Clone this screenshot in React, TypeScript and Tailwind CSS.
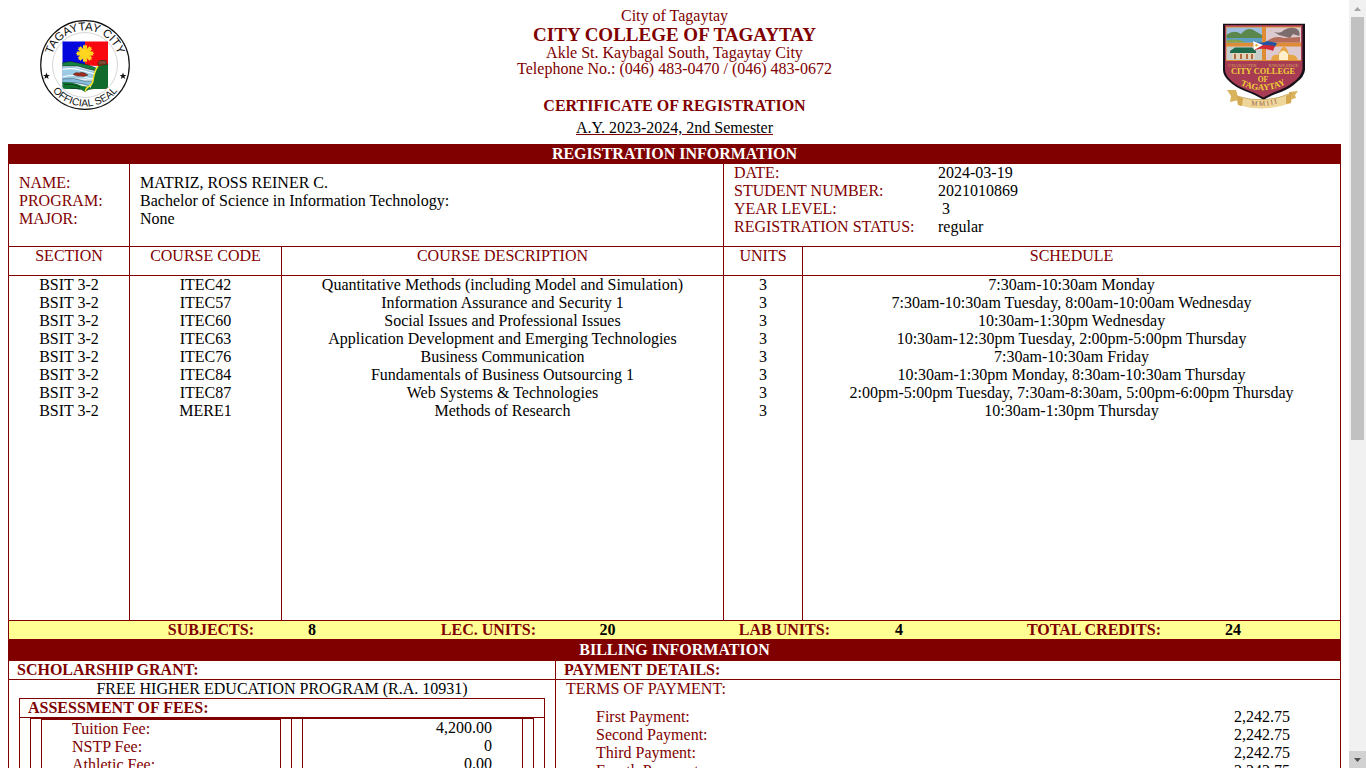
import React from "react";

const courses = [
  ["BSIT 3-2", "ITEC42", "Quantitative Methods (including Model and Simulation)", "3", "7:30am-10:30am Monday"],
  ["BSIT 3-2", "ITEC57", "Information Assurance and Security 1", "3", "7:30am-10:30am Tuesday, 8:00am-10:00am Wednesday"],
  ["BSIT 3-2", "ITEC60", "Social Issues and Professional Issues", "3", "10:30am-1:30pm Wednesday"],
  ["BSIT 3-2", "ITEC63", "Application Development and Emerging Technologies", "3", "10:30am-12:30pm Tuesday, 2:00pm-5:00pm Thursday"],
  ["BSIT 3-2", "ITEC76", "Business Communication", "3", "7:30am-10:30am Friday"],
  ["BSIT 3-2", "ITEC84", "Fundamentals of Business Outsourcing 1", "3", "10:30am-1:30pm Monday, 8:30am-10:30am Thursday"],
  ["BSIT 3-2", "ITEC87", "Web Systems & Technologies", "3", "2:00pm-5:00pm Tuesday, 7:30am-8:30am, 5:00pm-6:00pm Thursday"],
  ["BSIT 3-2", "MERE1", "Methods of Research", "3", "10:30am-1:30pm Thursday"],
];

const columns = ["SECTION", "COURSE CODE", "COURSE DESCRIPTION", "UNITS", "SCHEDULE"];

const totals = [
  ["SUBJECTS:", "8"],
  ["LEC. UNITS:", "20"],
  ["LAB UNITS:", "4"],
  ["TOTAL CREDITS:", "24"],
];

const fees = [
  ["Tuition Fee:", "4,200.00"],
  ["NSTP Fee:", "0"],
  ["Athletic Fee:", "0.00"],
];

const payments = [
  ["First Payment:", "2,242.75"],
  ["Second Payment:", "2,242.75"],
  ["Third Payment:", "2,242.75"],
  ["Fourth Payment:", "2,242.75"],
];

function CitySeal() {
  const rays = [0, 45, 90, 135, 180, 225, 270, 315];
  return (
    <svg viewBox="0 0 90 90" className="h-[90px] w-[90px]" role="img" aria-label="Tagaytay City official seal">
      <defs>
        <path id="seal-top" d="M12 55 A34.5 34.5 0 1 1 78 55" />
        <path id="seal-bottom" d="M3.500 45 A41.500 41.500 0 0 0 86.500 45" />
        <clipPath id="seal-shield">
          <path d="M22.500 21.500 H68 V66 Q68 69 64 69 H54 Q48 69 45 72 Q42 69 36 69 H26 Q22.500 69 22.500 66 Z" />
        </clipPath>
      </defs>
      <circle cx="45" cy="45" r="44.300" fill="#fff" stroke="#111" strokeWidth="1.200" />
      <circle cx="45" cy="45" r="32.500" fill="none" stroke="#bbb" strokeWidth="0.600" />
      <g clipPath="url(#seal-shield)">
        <path d="M22 21 H45 V73 H22 Z" fill="#0508dc" />
        <path d="M45 21 H69 V73 H45 Z" fill="#f8080f" />
        <path d="M22 44 L58 46 V73 H22 Z" fill="#e4f0f6" />
        <path d="M22 43 Q30 40 38 43 Q48 44 58 49 L57 51 Q47 49 38 46 L22 46 Z" fill="#14853e" stroke="#123" strokeWidth="0.600" />
        <path d="M22 47 Q36 46 47 50 L58 52 L54 60 Q38 57 22 59 Z" fill="#9ccbe6" />
        <path d="M22 49.500 Q32 47.500 40 50 T56 54 M22 57 Q34 54 44 57 T54 58" fill="none" stroke="#fff" strokeWidth="1.200" />
        <path d="M33 54.500 Q36 51.500 39 53 Q43 51 48 55 L44 56.500 L37 56 Z" fill="#a02a22" stroke="#432" strokeWidth="0.500" />
        <path d="M22 59 Q34 57 44 61 L53 61 L50 66 Q36 61 22 63 Z" fill="#86bddc" stroke="#345" strokeWidth="0.500" />
        <path d="M22 62 Q34 62 42 66 L50 67 V73 H22 Z" fill="#10752f" />
        <path d="M24 64.500 Q33 63 40 67 M30 68 L40 69" fill="none" stroke="#111" strokeWidth="0.500" />
        <path d="M69 44 L58 46 Q53 53 53 62 L48 73 H69 Z" fill="#126b2d" />
        <path d="M58 46 Q54 52 53 61 Q52 65 48 67 Q46 68 45 72" fill="none" stroke="#f3e324" strokeWidth="1.400" />
        <path d="M58 42 L60 40.500 H66 L67 44.500 L58 45 Z" fill="#7e4931" stroke="#321" strokeWidth="0.600" />
        <g fill="#ffd51f">
          {rays.map((a) => (
            <path key={a} d="M43 28.500 L43 25 L44.300 25.700 L45 24 L45.700 25.700 L47 25 L47 28.500 Z" transform={`rotate(${a} 45 33.500)`} />
          ))}
          <circle cx="45" cy="33.500" r="5.500" />
        </g>
      </g>
      <g fill="#111">
        <path d="M0 -3.400 L0.900 -1 L3.400 -1 L1.400 0.600 L2.100 3 L0 1.600 L-2.100 3 L-1.400 0.600 L-3.400 -1 L-0.900 -1 Z" transform="translate(6.500 56)" />
        <path d="M0 -3.400 L0.900 -1 L3.400 -1 L1.400 0.600 L2.100 3 L0 1.600 L-2.100 3 L-1.400 0.600 L-3.400 -1 L-0.900 -1 Z" transform="translate(83 56)" />
      </g>
      <text fontFamily="Liberation Sans, sans-serif" fontSize="11.500" fill="#111" textAnchor="middle">
        <textPath href="#seal-top" startOffset="50%">TAGAYTAY CITY</textPath>
      </text>
      <text fontFamily="Liberation Sans, sans-serif" fontSize="10.200" fill="#111" textAnchor="middle">
        <textPath href="#seal-bottom" startOffset="50%">OFFICIAL SEAL</textPath>
      </text>
    </svg>
  );
}

function CollegeCrest() {
  return (
    <svg viewBox="0 0 90 90" className="h-[90px] w-[90px]" role="img" aria-label="City College of Tagaytay crest">
      <defs>
        <path id="crest-arc" d="M14 62 Q42 79 70 61" />
        <path id="ribbon-arc" d="M24 84 Q43 89 62 81" />
      </defs>
      <path d="M2 3.700 H84 V50 Q83 57 76 62 Q70 68 60 72 Q48 76 42.500 80 Q35 75 24 71 Q14 67 9 62 Q2 56 2 50 Z" fill="#17101a" />
      <path d="M4 5 H81.500 V49.500 Q80 56 74 61 Q68 66 59 70 Q48 74 42.500 77.500 Q35 73 25 69.500 Q15 65.500 10.500 61 Q4 55 4 49.500 Z" fill="#a63b53" />
      <path d="M5 6.500 H80 V41 H5 Z" fill="#e08b35" />
      <path d="M5.500 7.500 H41 V22.500 H5.500 Z" fill="#9dbdde" />
      <path d="M5.500 15 Q13 9 20 14 Q27 6 34 11 L41 15 V19 H5.500 Z" fill="#5c874c" />
      <path d="M5.500 18 H41 V22.500 H5.500 Z" fill="#5c9fc3" />
      <path d="M5.500 20.500 Q16 17.500 25 22.500 H5.500 Z" fill="#8aa24a" />
      <path d="M45 7.500 H80 V22.500 H45 Z" fill="#dccace" />
      <path d="M48 9 Q58 16 63 10 Q70 6 76 9 Q80 12 78 16 L72 14 L69 18 L58 15 Z" fill="#7d6c6c" />
      <path d="M46 21 Q54 15 63 18 L79 17 V22.500 H46 Z" fill="#b56c58" />
      <path d="M5.500 26.500 H41 V40 H5.500 Z" fill="#c5ceca" />
      <path d="M9 31 L14 27.500 H31 L35 31 V33 H9 Z" fill="#1f6a4c" />
      <path d="M11 33 H34 V39 H11 Z" fill="#e1d4b8" />
      <path d="M14 34 V39 M20 34 V39 M26 34 V39 M31 34 V39" stroke="#b06a42" strokeWidth="2" />
      <path d="M45 26.500 H80 V40 H45 Z" fill="#dccad0" />
      <path d="M50 40 Q51 34 57 35 L60 29 L63 26 L66 29 L68 35 Q75 34 77 40 Z" fill="#e7a444" />
      <path d="M58 40 V34 Q62 27 67 34 V40 Z" fill="#fff0c9" />
      <path d="M32 21 Q42 24 46 21 L56 23 L54 27 Q44 25 33 26 Z" fill="#2354a3" />
      <path d="M33 26 Q44 24 54 26 L52 31 Q43 27 34 30 Z" fill="#d22a35" />
      <path d="M32 21 L42 25 L33 30 Z" fill="#fff" />
      <circle cx="35.500" cy="25.300" r="1.200" fill="#e3aa25" />
      <g fontFamily="Liberation Serif, serif" textAnchor="middle" fill="#efcf38">
        <text x="21.500" y="46.500" fontSize="4.700" fill="#d9a65d">CHARACTER</text>
        <text x="62.500" y="46.500" fontSize="4.700" fill="#d9a65d">KNOWLEDGE</text>
        <text x="42" y="54" fontSize="8.400" fontWeight="bold">CITY COLLEGE</text>
        <text x="42" y="61.500" fontSize="7.500" fontWeight="bold">OF</text>
        <text fontSize="8.800" fontWeight="bold"><textPath href="#crest-arc" startOffset="50%">TAGAYTAY</textPath></text>
      </g>
      <path d="M6 70 L15 70 L18 80 L9 82 L10 76 Z M77 71 L68 72 L68 80 L75 78 L74 75 Z" fill="#d9b35d" />
      <path d="M15.500 76 Q43 85 71 73 L70 83 Q43 93 17 85 Z" fill="#efd69a" />
      <path d="M15.500 76 Q43 85 71 73" fill="none" stroke="#c39a49" strokeWidth="0.800" />
      <path d="M15.500 76 L22 78 L21 86 L17 85 Z M71 73 L65 76 L65 84 L70 83 Z" fill="#d4a850" />
      <text fontFamily="Liberation Serif, serif" fontSize="7" fill="#946048" textAnchor="middle">
        <textPath href="#ribbon-arc" startOffset="50%">M M I I I</textPath>
      </text>
    </svg>
  );
}

function InfoRow({ label, value }: { label: string; value: string }) {
  return (
    <div className="grid grid-cols-[204px_1fr]">
      <dt className="text-[#800000]">{label}</dt>
      <dd>{value}</dd>
    </div>
  );
}

function Scrollbar() {
  return (
    <div aria-hidden="true" className="flex w-[17px] shrink-0 flex-col bg-[#f1f1f1]">
      <div className="flex h-[17px] items-center justify-center">
        <svg viewBox="0 0 7 4" className="h-1 w-[7px]"><path d="M0 4 L3.500 0 L7 4 Z" fill="#a3a3a3" /></svg>
      </div>
      <div className="flex-1 px-0.5">
        <div className="h-[57.6%] w-[13px] bg-[#c1c1c1]" />
      </div>
      <div className="flex h-[17px] items-center justify-center bg-[#d2d2d2]">
        <svg viewBox="0 0 7 4" className="h-1 w-[7px]"><path d="M0 0 L3.500 4 L7 0 Z" fill="#505050" /></svg>
      </div>
    </div>
  );
}

export default function App() {
  return (
    <div className="flex h-screen overflow-hidden bg-white font-['Liberation_Serif',serif] text-[16px] leading-[18px] text-black">
      <main className="min-w-0 flex-1 overflow-hidden px-2">
        <header className="flex items-start justify-between pt-2">
          <div className="w-[152px] pt-3 pl-8"><CitySeal /></div>
          <div className="text-center text-[#800000]">
            <p className="leading-4">City of Tagaytay</p>
            <h1 className="text-[19px] leading-[21px] font-bold">CITY COLLEGE OF TAGAYTAY</h1>
            <p className="leading-4">Akle St. Kaybagal South, Tagaytay City</p>
            <p className="leading-4">Telephone No.: (046) 483-0470 / (046) 483-0672</p>
            <h2 className="pt-5 font-bold">CERTIFICATE OF REGISTRATION</h2>
            <p className="pt-1 pb-[7px] text-black underline decoration-[#800000]">A.Y. 2023-2024, 2nd Semester</p>
          </div>
          <div className="w-[152px] pt-3 pl-8"><CollegeCrest /></div>
        </header>

        <section className="border-x border-[#800000]">
          <h2 className="bg-[#800000] pb-px text-center leading-[19px] font-bold text-white">REGISTRATION INFORMATION</h2>
          <div className="grid grid-cols-[121fr_594fr_616fr] border-b border-[#800000]">
            <div className="border-r border-[#800000] pt-2.5 pl-2.5 text-[#800000]">
              <p>NAME:</p>
              <p>PROGRAM:</p>
              <p>MAJOR:</p>
            </div>
            <div className="border-r border-[#800000] pt-2.5 pl-2.5">
              <p>MATRIZ, ROSS REINER C.</p>
              <p>Bachelor of Science in Information Technology:</p>
              <p>None</p>
            </div>
            <dl className="pb-2.5 pl-2.5">
              <InfoRow label="DATE:" value="2024-03-19" />
              <InfoRow label="STUDENT NUMBER:" value="2021010869" />
              <InfoRow label="YEAR LEVEL:" value={"\u00a03"} />
              <InfoRow label="REGISTRATION STATUS:" value="regular" />
            </dl>
          </div>

          <table className="w-full table-fixed border-separate border-spacing-0 text-center">
            <colgroup>
              <col className="w-[9.09%]" />
              <col className="w-[11.42%]" />
              <col className="w-[33.21%]" />
              <col className="w-[5.94%]" />
              <col />
            </colgroup>
            <thead>
              <tr>
                {columns.map((c) => (
                  <th key={c} className="border-r border-b border-[#800000] pb-2.5 font-normal text-[#800000] last:border-r-0">{c}</th>
                ))}
              </tr>
            </thead>
            <tbody>
              {courses.map((row) => (
                <tr key={row[1]}>
                  {row.map((cell, i) => (
                    <td key={i} className="border-r border-[#800000] last:border-r-0">{cell}</td>
                  ))}
                </tr>
              ))}
              <tr>
                {columns.map((c) => (
                  <td key={c} className="h-[200px] border-r border-[#800000] last:border-r-0" />
                ))}
              </tr>
            </tbody>
          </table>

          <dl className="grid grid-cols-[245fr_116fr_166fr_143fr_151fr_138fr_193fr_144fr_35fr] border-t border-[#800000] bg-[#ffff93] font-bold">
            {totals.map(([label, value]) => (
              <React.Fragment key={label}>
                <dt className="text-right whitespace-nowrap text-[#800000]">{label}</dt>
                <dd className="text-center">{value}</dd>
              </React.Fragment>
            ))}
          </dl>
        </section>

        <section className="border-x border-[#800000]">
          <h2 className="bg-[#800000] text-center leading-[22px] font-bold text-white">BILLING INFORMATION</h2>
          <div className="grid grid-cols-[547fr_784fr]">
            <div className="border-r border-[#800000]">
              <h3 className="border-b border-[#800000] pl-2 font-bold text-[#800000]">SCHOLARSHIP GRANT:</h3>
              <p className="text-center">FREE HIGHER EDUCATION PROGRAM (R.A. 10931)</p>
              <div className="mx-2.5 border border-[#800000]">
                <h4 className="border-b border-[#800000] pl-2 font-bold text-[#800000]">ASSESSMENT OF FEES:</h4>
                <div className="mx-2.5 grid grid-cols-[262fr_242fr] border-t border-l border-[#800000]">
                  <div className="border-r border-[#800000] px-2.5">
                    <div className="border border-[#800000] pl-[30px] text-[#800000]">
                      {fees.map(([label]) => <p key={label}>{label}</p>)}
                    </div>
                  </div>
                  <div className="border-r border-[#800000] px-2.5">
                    <div className="border-x border-[#800000] pr-[30px] text-right">
                      {fees.map(([label, value]) => <p key={label}>{value}</p>)}
                    </div>
                  </div>
                </div>
              </div>
            </div>
            <div>
              <h3 className="border-b border-[#800000] pl-2 font-bold text-[#800000]">PAYMENT DETAILS:</h3>
              <p className="pl-2.5 text-[#800000]">TERMS OF PAYMENT:</p>
              <dl className="pt-2.5 pr-[50px] pl-10">
                {payments.map(([label, value]) => (
                  <div key={label} className="flex justify-between">
                    <dt className="text-[#800000]">{label}</dt>
                    <dd>{value}</dd>
                  </div>
                ))}
              </dl>
            </div>
          </div>
        </section>
      </main>
      <Scrollbar />
    </div>
  );
}
